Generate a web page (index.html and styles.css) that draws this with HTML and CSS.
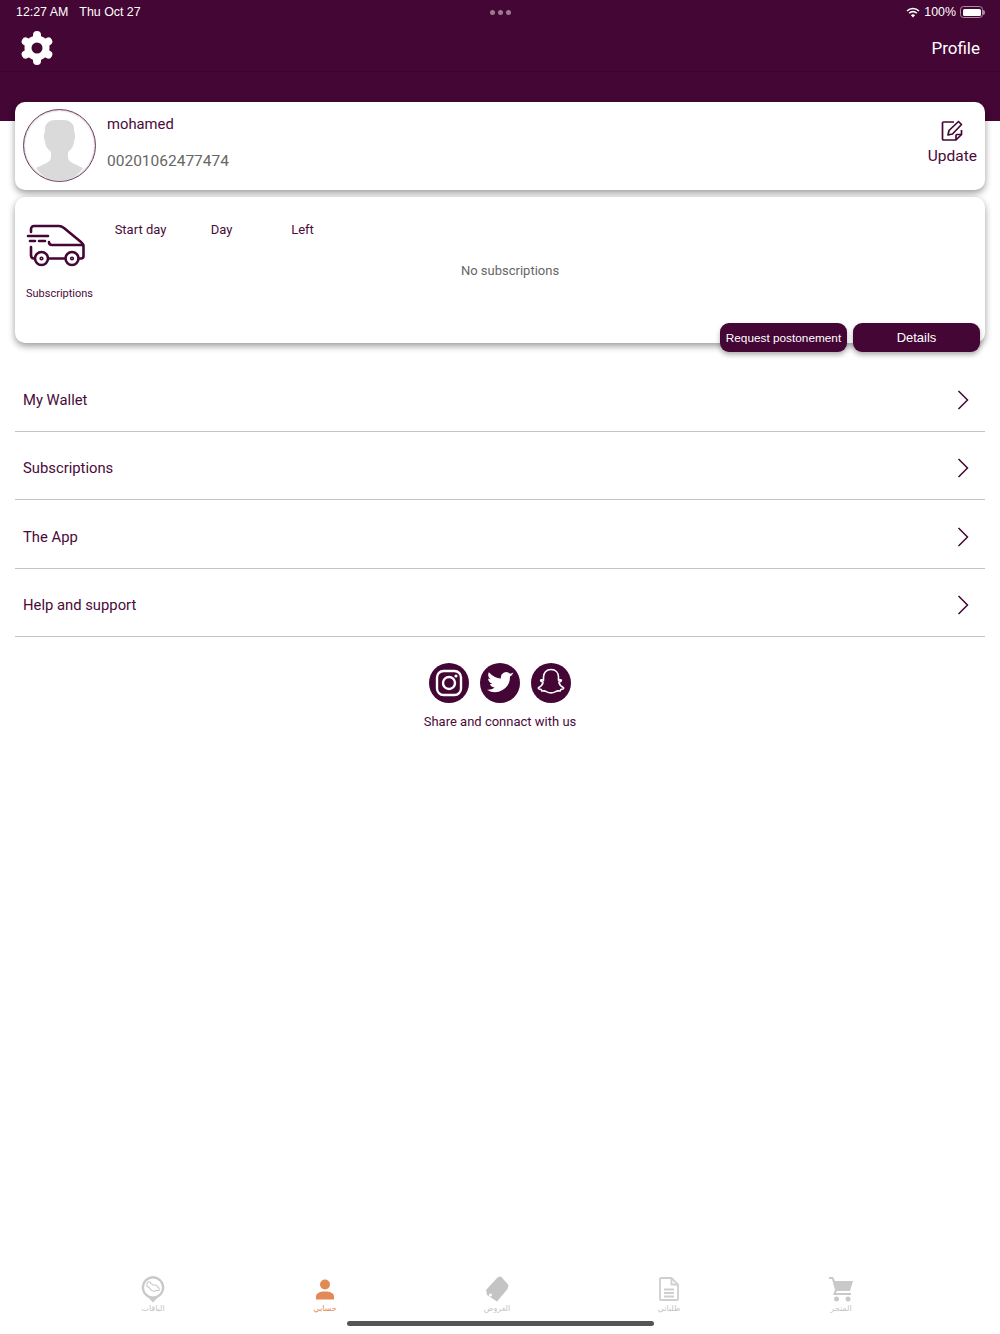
FILE: index.html
```html
<!DOCTYPE html>
<html lang="en">
<head>
  <meta charset="UTF-8" />
  <meta name="viewport" content="width=device-width, initial-scale=1.0" />
  <title>Profile</title>
  <link rel="stylesheet" href="styles.css">
</head>
<body>
  <div class="page">
    <header class="top">
      <div class="status">
        <div class="status-left"><span>12:27 AM</span><span>Thu Oct 27</span></div>
        <div class="dots"><i></i><i></i><i></i></div>
        <div class="status-right">
          <svg class="wifi" width="14" height="11" viewBox="0 0 14 11"><path d="M1 4a8.600 8.600 0 0 1 12 0M3.200 6.200a5.400 5.400 0 0 1 7.600 0" fill="none" stroke="#fff" stroke-width="1.600"/><path d="M7 10.600 4.900 8.200a3 3 0 0 1 4.200 0z" fill="#fff"/></svg>
          <span>100%</span>
          <div class="battery"><div class="battery-fill"></div></div>
        </div>
      </div>
      <div class="nav">
        <svg class="gear" width="34" height="36" viewBox="0 0 34 36">
          <g stroke="#fff" stroke-width="8" stroke-linecap="round">
            <path d="M17 5V31"/>
            <path d="M5.700 11.500 28.300 24.500"/>
            <path d="M5.700 24.500 28.300 11.500"/>
          </g>
          <circle cx="17" cy="18" r="12.500" fill="#fff"/>
          <circle cx="17" cy="18" r="5.500" fill="#440635"/>
        </svg>
        <span class="nav-title">Profile</span>
      </div>
    </header>

    <section class="card user-card">
      <div class="avatar">
        <svg width="70" height="70" viewBox="0 0 70 70"><path d="M11 57C18 53 26 52 26 46V41C22 38 20 34 20 30 18 27 19 22 20 20 19 13 24 9 30 9H39C45 9 50 13 49 20 50 22 51 27 49 30 49 34 47 38 43 41V46C43 52 51 53 58 57 52 66 44 70 35 70 26 70 17 66 11 57z" fill="#dadada"/></svg>
      </div>
      <div class="user-info">
        <div class="user-name">mohamed</div>
        <div class="user-phone">00201062477474</div>
      </div>
      <div class="update">
        <svg width="22" height="22" viewBox="0 0 22 22" fill="none" stroke="#440635" stroke-width="1.700" stroke-linejoin="round"><path d="M13 2H2.500a1 1 0 0 0-1 1v16a1 1 0 0 0 1 1H15l5.500-5.500V10"/><path d="M15 20v-4.500a1 1 0 0 1 1-1h4.500"/><path d="M7 15l1-4.500L17.500 1.500l3 3L11.500 14z"/></svg>
        <span>Update</span>
      </div>
    </section>

    <section class="card subs-card">
      <div class="subs-body">
        <div class="subs-side">
          <svg class="truck" width="60" height="44" viewBox="0 0 60 44" fill="none" stroke="#440635" stroke-width="2.600" stroke-linecap="round" stroke-linejoin="round">
            <path d="M5 9V6a3 3 0 0 1 3-3h25c2 0 3 .5 5 2l17 14c1.500 1.200 2.500 2.500 2.500 4.500V33c0 1.500-1 2.500-2.500 2.500h-2"/>
            <path d="M2 13h20M23 19c0 2 1 3 3 3h31"/>
            <path d="M4 18h5M13 18h6M5 24v8c0 2 1 3.500 3 3.500M23 35.500h15"/>
            <circle cx="15.500" cy="35.500" r="6.500"/><circle cx="46" cy="35.500" r="6.500"/>
            <circle cx="15.500" cy="35.500" r=".8"/><circle cx="46" cy="35.500" r=".8"/>
          </svg>
          <span class="subs-label">Subscriptions</span>
        </div>
        <div class="subs-main">
          <div class="subs-head">
            <span>Start day</span>
            <span>Day</span>
            <span>Left</span>
          </div>
          <div class="subs-empty">No subscriptions</div>
        </div>
      </div>
      <div class="subs-actions">
        <button class="btn btn-long">Request postonement</button>
        <button class="btn">Details</button>
      </div>
    </section>

    <nav class="menu">
      <a class="menu-row"><span>My Wallet</span><svg width="12" height="20" viewBox="0 0 12 20"><path d="M1.500 1 10.500 10 1.500 19" fill="none" stroke="#440635" stroke-width="1.500"/></svg></a>
      <a class="menu-row"><span>Subscriptions</span><svg width="12" height="20" viewBox="0 0 12 20"><path d="M1.500 1 10.500 10 1.500 19" fill="none" stroke="#440635" stroke-width="1.500"/></svg></a>
      <a class="menu-row"><span>The App</span><svg width="12" height="20" viewBox="0 0 12 20"><path d="M1.500 1 10.500 10 1.500 19" fill="none" stroke="#440635" stroke-width="1.500"/></svg></a>
      <a class="menu-row"><span>Help and support</span><svg width="12" height="20" viewBox="0 0 12 20"><path d="M1.500 1 10.500 10 1.500 19" fill="none" stroke="#440635" stroke-width="1.500"/></svg></a>
    </nav>

    <div class="social">
      <div class="social-icons">
        <svg width="40" height="40" viewBox="0 0 40 40"><circle cx="20" cy="20" r="20" fill="#440635"/><rect x="8" y="8" width="24" height="24" rx="6.500" fill="none" stroke="#fff" stroke-width="2.400"/><circle cx="20" cy="20" r="6" fill="none" stroke="#fff" stroke-width="2.400"/><circle cx="27" cy="13" r="1.600" fill="#fff"/></svg>
        <svg width="40" height="40" viewBox="0 0 40 40"><circle cx="20" cy="20" r="20" fill="#440635"/><path d="M34 11.500c-1 .5-2 .8-3 .9 1.100-.7 1.900-1.700 2.300-2.900-1 .6-2.200 1-3.300 1.300a5.300 5.300 0 0 0-9 4.800C16.600 15.300 12 13 8.900 9.200c-1.400 2.400-.7 5.500 1.600 7-.8 0-1.700-.2-2.400-.6 0 2.500 1.800 4.700 4.200 5.200-.8.200-1.600.2-2.400.1.700 2.100 2.600 3.600 4.900 3.600A10.600 10.600 0 0 1 7 26.700a15 15 0 0 0 23-13.300c1.100-.5 2.300-1 4-1.900z" fill="#fff"/></svg>
        <svg width="40" height="40" viewBox="0 0 40 40"><circle cx="20" cy="20" r="20" fill="#440635"/><path d="M20 6.500c4.800 0 7.500 3.400 7.500 7.500v3.200l2-.5c1 0 1.200 1 .4 1.500l-2 1c.4 2.200 2 4.200 4.300 5.200.8.400.5 1.200-.4 1.500l-2 .6-.6 1.500-2.400-.1c-1.800 0-3 2-6.800 2s-5-2-6.800-2l-2.400.1-.6-1.500-2-.6c-.9-.3-1.200-1.100-.4-1.500 2.300-1 3.900-3 4.300-5.200l-2-1c-.8-.5-.6-1.500.4-1.500l2 .5V14c0-4.100 2.700-7.500 7.500-7.500z" fill="none" stroke="#fff" stroke-width="1.600" stroke-linejoin="round"/></svg>
      </div>
      <div class="social-text">Share and connact with us</div>
    </div>

    <footer class="tabbar">
      <div class="tabs">
        <div class="tab">
          <div class="tab-icon"><svg width="24" height="28" viewBox="0 0 24 28"><path d="M12 1a11.500 11.500 0 0 1 4 22.200L12 27.500l-4-4.300A11.500 11.500 0 0 1 12 1z" fill="#c9c9c9"/><circle cx="12" cy="12.500" r="9" fill="#fff"/><path d="M6 9.500a2 2 0 0 1 4-1l2 1.500h3l3 3v2.500h-3l-1.500 1-3-1-2-2.500-2.500-2z" fill="none" stroke="#c9c9c9" stroke-width="1.100"/></svg></div>
          <span>الباقات</span>
        </div>
        <div class="tab tab-active">
          <div class="tab-icon"><svg width="20" height="21" viewBox="0 0 20 21"><circle cx="10" cy="5.500" r="5" fill="#e28a55"/><path d="M1 20.500v-3c0-3 3-5 9-5s9 2 9 5v3z" fill="#e28a55"/></svg></div>
          <span>حسابي</span>
        </div>
        <div class="tab">
          <div class="tab-icon"><svg width="26" height="28" viewBox="0 0 26 28"><path d="M17 1.500l7.500 8.500-1 4L13 26.500 3 20l-1-5L14 2z" fill="#c4c4c4"/><circle cx="6.500" cy="20" r="1.600" fill="#fff"/></svg></div>
          <span>العروض</span>
        </div>
        <div class="tab">
          <div class="tab-icon"><svg width="20" height="24" viewBox="0 0 20 24" fill="none" stroke="#cfcfcf" stroke-width="1.800"><path d="M12.500 1H2a1 1 0 0 0-1 1v20a1 1 0 0 0 1 1h16a1 1 0 0 0 1-1V7.500z"/><path d="M12.500 1v6.500H19M5 12.500h10M5 16h10M5 19.500h10"/></svg></div>
          <span>طلباتي</span>
        </div>
        <div class="tab">
          <div class="tab-icon"><svg width="26" height="26" viewBox="0 0 26 26"><path d="M1 1h4l2 4h18l-3 10H9l-1 2h15v2H5l2-5L4 3H1z" fill="#c9c9c9"/><circle cx="8.500" cy="23" r="2.500" fill="#c9c9c9"/><circle cx="20" cy="23" r="2.500" fill="#c9c9c9"/></svg></div>
          <span>المتجر</span>
        </div>
      </div>
      <div class="home-bar"></div>
    </footer>
  </div>
</body>
</html>
```

FILE: styles.css
```css
* {
  box-sizing: border-box;
}
body {
  margin: 0;
  background: #fff;
  color: #4a0a3a;
  font-family: Roboto, sans-serif;
}
.page {
  height: 1334px;
  display: flex;
  flex-direction: column;
  overflow: hidden;
}

/* top bar */
.top {
  height: 121px;
  background: #440635;
  color: #fff;
}
.status {
  height: 24px;
  padding: 0 15px 0 16px;
  display: grid;
  grid-template-columns: 1fr auto 1fr;
  align-items: center;
  font-family: "Liberation Sans", Arial, sans-serif;
  font-size: 12.400px;
}
.status-left {
  display: flex;
  gap: 11px;
}
.dots {
  display: flex;
  gap: 3px;
}
.dots i {
  width: 5px;
  height: 5px;
  border-radius: 50%;
  background: #9a7a90;
}
.status-right {
  display: flex;
  justify-content: flex-end;
  align-items: center;
  gap: 4px;
}
.battery {
  position: relative;
  width: 23px;
  height: 12px;
  margin-right: 2px;
  border: 1px solid #a98ca0;
  border-radius: 3.500px;
  padding: 1.500px;
}
.battery::after {
  content: "";
  position: absolute;
  right: -3px;
  top: 2.500px;
  width: 2px;
  height: 5px;
  border-radius: 0 2px 2px 0;
  background: #a98ca0;
}
.battery-fill {
  height: 100%;
  background: #fff;
  border-radius: 1.500px;
}
.nav {
  height: 48px;
  padding: 0 20px;
  display: flex;
  justify-content: space-between;
  align-items: center;
  border-bottom: 1px solid #3c052e;
}
.nav-title {
  font-size: 17px;
}

/* cards */
.card {
  margin: 0 15px;
  background: #fff;
  border-radius: 10px;
  box-shadow: 0 3px 7px rgba(0,0,0,0.4);
}
.user-card {
  height: 88px;
  margin-top: -19px;
  padding: 0 8px;
  display: flex;
  align-items: center;
}
.avatar {
  width: 73px;
  height: 73px;
  margin-bottom: 1px;
  border-radius: 50%;
  border: 1.500px solid #6d3a5e;
  overflow: hidden;
  display: flex;
  justify-content: center;
  align-items: center;
  box-shadow: inset 0 0 2px rgba(0,0,0,0.4);
}
.user-info {
  margin-left: 11px;
  padding-bottom: 8px;
  flex: 1;
}
.user-name {
  font-size: 14.800px;
  line-height: 20px;
}
.user-phone {
  margin-top: 17px;
  font-size: 15.500px;
  line-height: 20px;
  color: #666;
}
.update {
  padding-bottom: 7px;
  display: flex;
  flex-direction: column;
  align-items: center;
  gap: 5px;
  font-size: 15.500px;
}
.subs-card {
  height: 146px;
  margin-top: 7px;
  padding: 0 5px 0 12px;
  display: flex;
  flex-direction: column;
}
.subs-body {
  flex: 1;
  display: flex;
}
.subs-side {
  width: 65px;
  padding-top: 26px;
  display: flex;
  flex-direction: column;
  align-items: center;
  gap: 19px;
}
.truck {
  margin-right: 8px;
}
.subs-label {
  font-size: 11px;
  line-height: 16px;
}
.subs-main {
  flex: 1;
  padding-top: 24px;
  font-size: 13px;
}
.subs-head {
  margin-left: 8px;
  display: flex;
}
.subs-head span {
  width: 81px;
  line-height: 18px;
  text-align: center;
}
.subs-empty {
  margin-top: 23px;
  padding-right: 52px;
  text-align: center;
  color: #666;
  line-height: 18px;
}
.subs-actions {
  margin-bottom: -9px;
  display: flex;
  justify-content: flex-end;
  gap: 6px;
}
.btn {
  width: 127px;
  height: 29px;
  padding: 0;
  background: #440635;
  border: none;
  border-radius: 9px;
  color: #fff;
  font-family: "Liberation Sans", Arial, sans-serif;
  font-size: 13px;
  box-shadow: 0 3px 5px rgba(0,0,0,0.3);
}
.btn-long {
  font-size: 11.800px;
}

/* menu */
.menu {
  margin: 20.400px 15px 0;
}
.menu-row {
  height: 68.400px;
  padding: 6px 16px 0 8px;
  display: flex;
  justify-content: space-between;
  align-items: center;
  border-bottom: 1px solid #c4c4c4;
  font-size: 14.800px;
}

/* social */
.social {
  margin-top: 26px;
  text-align: center;
}
.social-icons {
  display: flex;
  justify-content: center;
  gap: 11px;
}
.social-text {
  margin-top: 9px;
  font-size: 13px;
  line-height: 20px;
}

/* bottom tabs */
.tabbar {
  margin-top: auto;
}
.tabs {
  padding: 0 73px 0 67px;
  display: flex;
  justify-content: space-between;
  align-items: flex-end;
}
.tab {
  width: 172px;
  display: flex;
  flex-direction: column;
  align-items: center;
  gap: 1px;
  font-family: "DejaVu Sans", sans-serif;
  font-size: 8px;
  color: #c4c4c4;
}
.tab-icon {
  height: 28px;
  display: flex;
  align-items: center;
}
.tab-active {
  color: #e28a55;
}
.home-bar {
  width: 307px;
  height: 5px;
  margin: 8px auto;
  border-radius: 3px;
  background: #555;
}
```
